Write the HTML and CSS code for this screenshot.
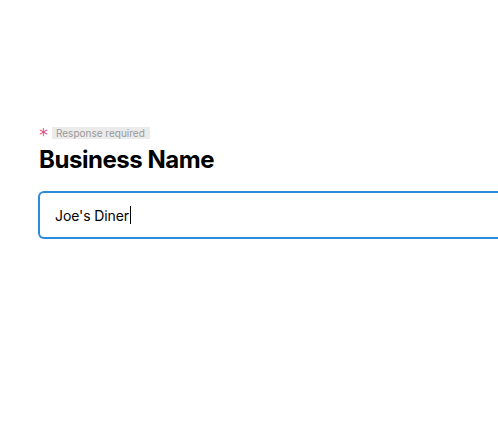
FILE: index.html
```
<!DOCTYPE html>
<html>
<head>
<meta charset="utf-8">
<link rel="stylesheet" href="styles.css">
</head>
<body>
<main class="page">
  <section class="field">
    <div class="req">
      <span class="star">*</span>
      <span class="badge">Response required</span>
    </div>
    <h1 class="title">Business Name</h1>
    <div class="input">
      <span class="value">Joe's Diner</span><span class="caret"></span>
    </div>
  </section>
</main>
</body>
</html>
```
FILE: styles.css
```
html, body {
  margin: 0;
  padding: 0;
  background: #ffffff;
}
body {
  font-family: Inter, "Noto Sans", sans-serif;
  color: #000;
  overflow: hidden;
  width: 498px;
  height: 431px;
}
.page {
  padding: 127px 0 0 38px;
}
.field {
  display: flex;
  flex-direction: column;
}
.req {
  display: flex;
  align-items: center;
  gap: 3px;
  height: 12px;
}
.star {
  color: #e2498a;
  font-size: 17px;
  line-height: 12px;
  font-family: "DejaVu Sans", sans-serif;
  padding-top: 4px;
  width: 11px;
  text-align: center;
}
.badge {
  background: #ebebeb;
  color: #9a9a9a;
  font-size: 10px;
  line-height: 12px;
  padding: 0 5px 0 4px;
}
.title {
  margin: 6px 0 0 1px;
  font-size: 24px;
  font-weight: 700;
  line-height: 29px;
  letter-spacing: -0.45px;
}
.input {
  margin-top: 17px;
  height: 44px;
  border: 2px solid #2b8ad9;
  border-right: none;
  border-radius: 6px 0 0 6px;
  display: flex;
  align-items: center;
  padding-left: 15px;
  font-family: Inter, "Noto Sans", sans-serif;
  font-size: 14px;
}
.value {
  letter-spacing: -0.1px;
}
.caret {
  display: inline-block;
  width: 1px;
  height: 18px;
  background: #000;
  margin-left: 1px;
}
```
